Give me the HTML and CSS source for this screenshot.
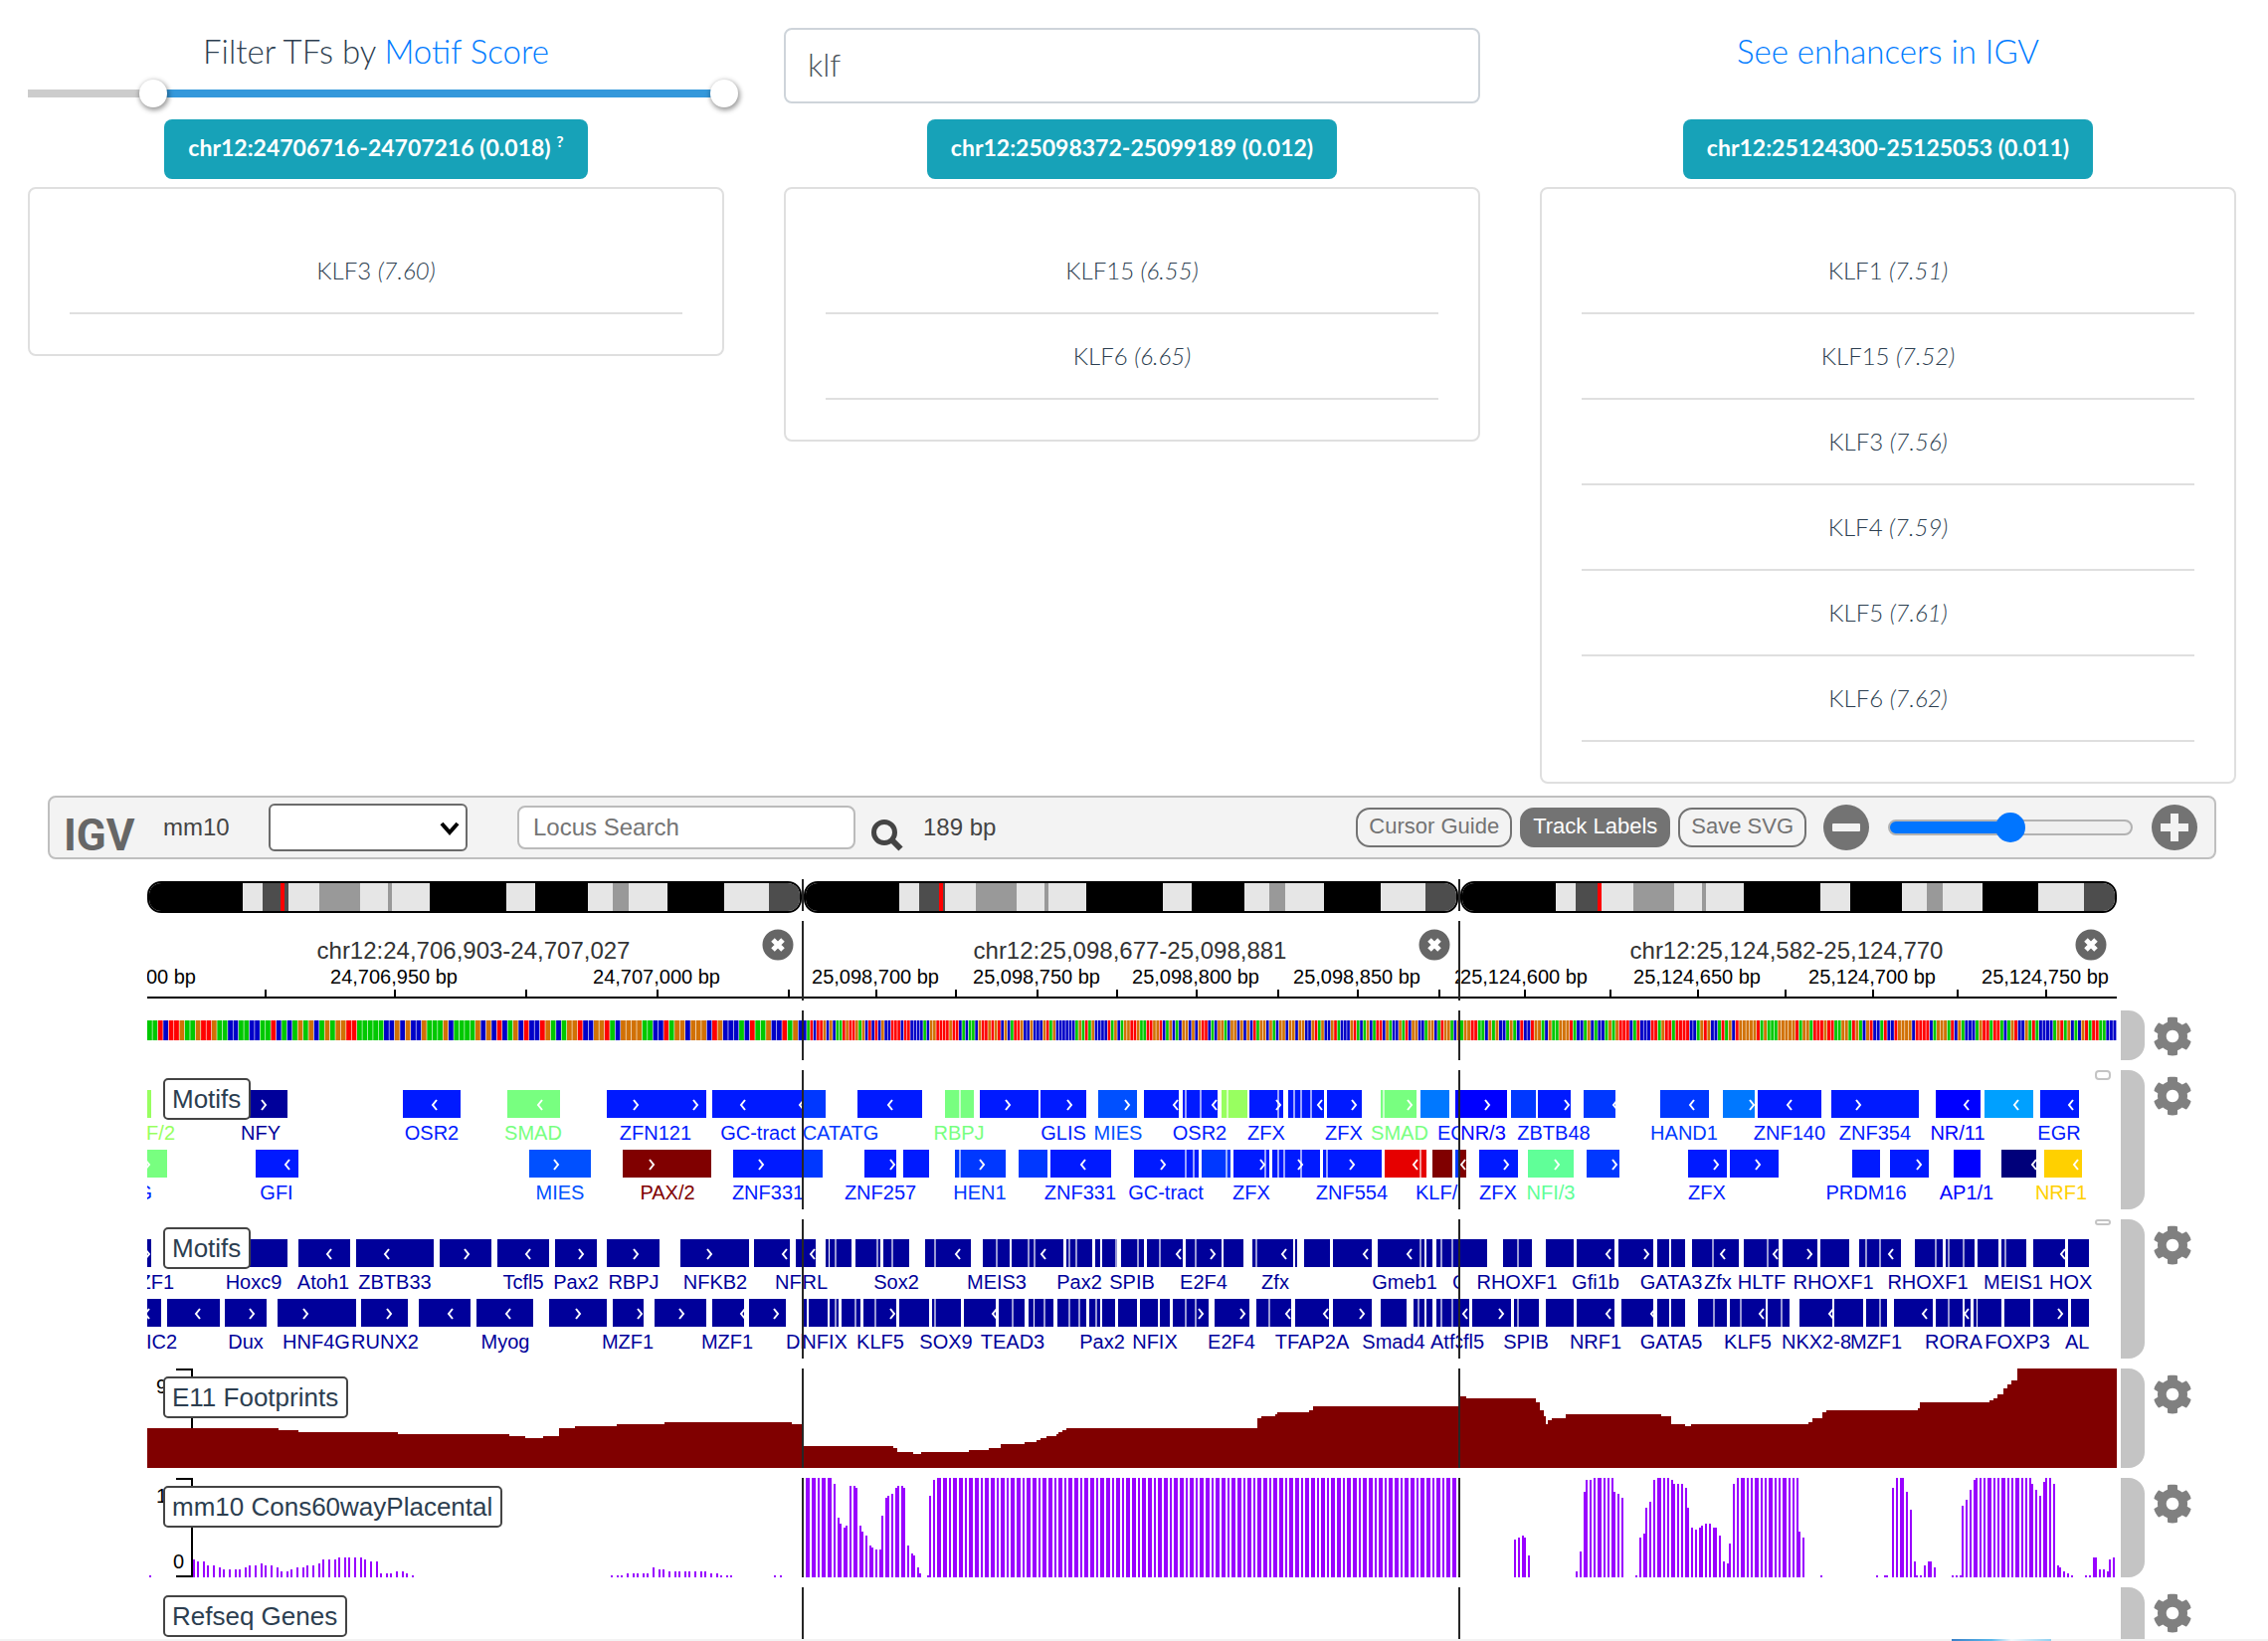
FILE: index.html
```html
<!DOCTYPE html>
<html lang="en">
<head>
<meta charset="utf-8">
<title>TF motif enhancers</title>
<link rel="stylesheet" href="styles.css">
</head>
<body>
<svg class="sprite" aria-hidden="true">
  <symbol id="cog" viewBox="0 0 512 512"><path d="M487.4 315.7l-42.6-24.6c4.3-23.2 4.3-47 0-70.2l42.6-24.6c4.9-2.8 7.1-8.6 5.5-14-11.1-35.6-30-67.8-54.7-94.6-3.8-4.1-10-5.1-14.8-2.3L380.8 110c-17.9-15.4-38.5-27.3-60.8-35.1V25.8c0-5.6-3.9-10.5-9.4-11.7-36.7-8.2-74.3-7.8-109.2 0-5.5 1.2-9.4 6.1-9.4 11.7V75c-22.2 7.9-42.8 19.8-60.8 35.1L88.7 85.5c-4.9-2.8-11-1.9-14.8 2.3-24.7 26.7-43.6 58.9-54.7 94.6-1.7 5.4.6 11.2 5.5 14L67.3 221c-4.3 23.2-4.3 47 0 70.2l-42.6 24.6c-4.9 2.8-7.1 8.6-5.5 14 11.1 35.6 30 67.8 54.7 94.6 3.8 4.1 10 5.1 14.8 2.3l42.6-24.6c17.9 15.4 38.5 27.3 60.8 35.1v49.2c0 5.6 3.9 10.5 9.4 11.7 36.7 8.2 74.3 7.8 109.2 0 5.5-1.2 9.4-6.1 9.4-11.7v-49.2c22.2-7.9 42.8-19.8 60.8-35.1l42.6 24.6c4.9 2.8 11 1.9 14.8-2.3 24.7-26.7 43.6-58.9 54.7-94.6 1.5-5.5-.7-11.3-5.6-14.1zM256 336c-44.1 0-80-35.9-80-80s35.9-80 80-80 80 35.9 80 80-35.9 80-80 80z"/></symbol>
  <symbol id="close" viewBox="0 0 32 32"><circle cx="16" cy="16" r="15.5" fill="#666"/><path d="M11 11l10 10M21 11L11 21" stroke="#fff" stroke-width="5"/></symbol>
</svg>

<main>
  <section class="columns">
    <div class="column">
      <div class="column-head">
        <p class="title">Filter TFs by <a href="#score">Motif Score</a></p>
        <div class="dual-range">
          <input type="range" min="0" max="100" value="18" aria-label="Minimum motif score">
          <input type="range" min="0" max="100" value="100" aria-label="Maximum motif score">
        </div>
      </div>
      <span class="badge">chr12:24706716-24707216 (0.018) <sup>?</sup></span>
      <ul class="card">
        <li>KLF3 <em>(7.60)</em></li>
      </ul>
    </div>
    <div class="column">
      <div class="column-head">
        <input class="tf-search" type="text" value="klf" aria-label="Search TFs">
      </div>
      <span class="badge">chr12:25098372-25099189 (0.012)</span>
      <ul class="card">
        <li>KLF15 <em>(6.55)</em></li>
        <li>KLF6 <em>(6.65)</em></li>
      </ul>
    </div>
    <div class="column">
      <div class="column-head">
        <p class="title"><a href="#igv">See enhancers in IGV</a></p>
      </div>
      <span class="badge">chr12:25124300-25125053 (0.011)</span>
      <ul class="card">
        <li>KLF1 <em>(7.51)</em></li>
        <li>KLF15 <em>(7.52)</em></li>
        <li>KLF3 <em>(7.56)</em></li>
        <li>KLF4 <em>(7.59)</em></li>
        <li>KLF5 <em>(7.61)</em></li>
        <li>KLF6 <em>(7.62)</em></li>
      </ul>
    </div>
  </section>

  <section class="igv" id="igv">
    <div class="toolbar">
      <span class="logo">IGV</span>
      <span class="genome">mm10</span>
      <span class="chrom">
        <select aria-label="Chromosome"><option></option></select>
        <svg width="20" height="14" viewBox="0 0 20 14" aria-hidden="true"><path d="M2 2l8 9 8-9" fill="none" stroke="#000" stroke-width="4"/></svg>
      </span>
      <input class="locus" type="text" placeholder="Locus Search" aria-label="Locus Search">
      <button class="icon-button search" aria-label="Search">
        <svg width="32" height="32" viewBox="0 0 32 32"><circle cx="13" cy="13" r="10.5" fill="none" stroke="#444" stroke-width="5"/><path d="M20 20l9.500 9.500" stroke="#444" stroke-width="6"/></svg>
      </button>
      <span class="window-size">189 bp</span>
      <div class="tools">
        <button class="pill">Cursor Guide</button>
        <button class="pill active">Track Labels</button>
        <button class="pill">Save SVG</button>
        <button class="icon-button zoom-out" aria-label="Zoom out">
          <svg width="46" height="46" viewBox="0 0 46 46"><circle cx="23" cy="23" r="23" fill="#737373"/><rect x="9" y="19" width="28" height="8" rx="1" fill="#f3f3f3"/></svg>
        </button>
        <input class="zoom" type="range" min="0" max="100" value="50" aria-label="Zoom">
        <button class="icon-button zoom-in" aria-label="Zoom in">
          <svg width="46" height="46" viewBox="0 0 46 46"><circle cx="23" cy="23" r="23" fill="#737373"/><path d="M9 19h10V9h8v10h10v8H27v10h-8V27H9z" fill="#f3f3f3"/></svg>
        </button>
      </div>
    </div>

    <div class="tracks">
      <div class="track ideogram" data-kind="ideogram">
        <div class="panels"></div>
      </div>
      <div class="track ruler">
        <div class="panels">
          <div class="panel"><p class="range">chr12:24,706,903-24,707,027</p><button class="icon-button close" aria-label="Close panel"><svg width="32" height="32"><use href="#close"/></svg></button></div>
          <div class="panel"><p class="range">chr12:25,098,677-25,098,881</p><button class="icon-button close" aria-label="Close panel"><svg width="32" height="32"><use href="#close"/></svg></button></div>
          <div class="panel"><p class="range">chr12:25,124,582-25,124,770</p><button class="icon-button close" aria-label="Close panel"><svg width="32" height="32"><use href="#close"/></svg></button></div>
        </div>
      </div>
      <div class="track sequence" data-kind="sequence">
        <div class="panels"></div>
        <span class="handle"></span>
        <button class="icon-button gear" aria-label="Track settings"><svg width="40" height="40"><use href="#cog"/></svg></button>
      </div>
      <div class="track motifs" data-kind="motifs">
        <div class="panels"><span class="track-label">Motifs</span><span class="scroll-thumb"></span></div>
        <span class="handle"></span>
        <button class="icon-button gear" aria-label="Track settings"><svg width="40" height="40"><use href="#cog"/></svg></button>
      </div>
      <div class="track motifs" data-kind="denseMotifs">
        <div class="panels"><span class="track-label">Motifs</span><span class="scroll-thumb short"></span></div>
        <span class="handle"></span>
        <button class="icon-button gear" aria-label="Track settings"><svg width="40" height="40"><use href="#cog"/></svg></button>
      </div>
      <div class="track wiggle" data-kind="footprints">
        <div class="panels"><span class="track-label">E11 Footprints</span></div>
        <span class="handle"></span>
        <button class="icon-button gear" aria-label="Track settings"><svg width="40" height="40"><use href="#cog"/></svg></button>
      </div>
      <div class="track wiggle" data-kind="conservation">
        <div class="panels"><span class="track-label">mm10 Cons60wayPlacental</span></div>
        <span class="handle"></span>
        <button class="icon-button gear" aria-label="Track settings"><svg width="40" height="40"><use href="#cog"/></svg></button>
      </div>
      <div class="track genes" data-kind="genes">
        <div class="panels"><span class="track-label">Refseq Genes</span></div>
        <span class="handle"></span>
        <button class="icon-button gear" aria-label="Track settings"><svg width="40" height="40"><use href="#cog"/></svg></button>
      </div>
    </div>
  </section>
</main>
<footer class="strip"></footer>
<script src="tracks.js"></script>
</body>
</html>
```
FILE: styles.css
```css
* { box-sizing: border-box; }

body {
  margin: 0;
  background: #fff;
  color: #2c3e50;
  font-family: Lato, "Liberation Sans", sans-serif;
  font-size: 24px;
  overflow-x: hidden;
}

p, ul { margin: 0; padding: 0; }
a { color: #007bff; text-decoration: none; }
button, input, select { font: inherit; margin: 0; }
svg { display: block; }
.sprite { position: absolute; width: 0; height: 0; }

.icon-button {
  padding: 0;
  border: 0;
  background: none;
  flex: none;
}

/* Filter columns */
.columns {
  display: grid;
  grid-template-columns: repeat(3, 1fr);
  gap: 60px;
  align-items: start;
  padding: 28px 32px 0 28px;
  font-weight: 300;
}
.column { display: flex; flex-direction: column; align-items: center; }
.column-head { width: 100%; height: 92px; }
.title { height: 44px; font-size: 33px; line-height: 46px; text-align: center; }

.dual-range {
  position: relative;
  height: 28px;
  margin-top: 8px;
  background: linear-gradient(to right, #ccc 18%, #3498db 18%) center / 100% 8px no-repeat;
}
.dual-range input {
  position: absolute;
  left: -14px;
  top: 0;
  width: calc(100% + 28px);
  height: 28px;
  appearance: none;
  background: none;
  pointer-events: none;
}
.dual-range input::-webkit-slider-thumb {
  appearance: none;
  width: 28px;
  height: 28px;
  border-radius: 50%;
  background: #fff;
  box-shadow: 1px 2px 5px 1px rgba(0, 0, 0, .4);
  pointer-events: auto;
}

.tf-search {
  display: block;
  width: 100%;
  height: 76px;
  padding: 0 22px 4px;
  border: 2px solid #ced4da;
  border-radius: 8px;
  color: #495057;
  font-size: 32px;
}

.badge {
  height: 60px;
  padding: 10px 24px 14px;
  border-radius: 8px;
  background: #17a2b8;
  color: #fff;
  font-size: 23px;
  font-weight: 700;
  line-height: 36px;
}
.badge sup { font-size: 16px; line-height: 0; }

.card {
  width: 100%;
  margin-top: 8px;
  padding: 40px;
  border: 2px solid #dfdfdf;
  border-radius: 8px;
  list-style: none;
}
.card li {
  padding: 24px 0;
  border-bottom: 2px solid #dfdfdf;
  line-height: 36px;
  text-align: center;
}

/* Genome browser */
.igv {
  margin: 12px 52px 0 48px;
  font-family: "Liberation Sans", Arial, sans-serif;
}
.toolbar {
  display: flex;
  align-items: center;
  height: 64px;
  padding: 0 17px 0 14px;
  border: 2px solid #bfbfbf;
  border-radius: 8px;
  background: #f3f3f3;
  color: #444;
}
.logo {
  width: 100px;
  padding-top: 16px;
  color: #666;
  font-family: Roboto, sans-serif;
  font-size: 44px;
  font-weight: 700;
  line-height: 44px;
}
.genome { width: 106px; }
.chrom { position: relative; }
.chrom select {
  display: block;
  width: 200px;
  height: 48px;
  border: 2px solid #6b6b6b;
  border-radius: 6px;
  background: #fff;
  appearance: none;
}
.chrom svg { position: absolute; right: 8px; top: 18px; }
.locus {
  width: 340px;
  height: 44px;
  margin-left: 50px;
  padding: 0 14px;
  border: 2px solid #bbb;
  border-radius: 8px;
}
.locus::placeholder { color: #757575; opacity: 1; }
.search { margin: 16px 20px 0 16px; }

.tools { display: flex; align-items: center; margin-left: auto; }
.pill {
  height: 40px;
  margin-right: 8px;
  padding: 0 11px 2px;
  border: 2px solid #737373;
  border-radius: 14px;
  background: none;
  color: #737373;
  font-size: 22px;
  white-space: nowrap;
}
.pill.active { background: #737373; color: #fff; }
.zoom-out { margin: 0 19px 0 9px; }
.zoom-in { margin-left: 19px; }
.zoom {
  width: 246px;
  height: 16px;
  border: 2px solid #b2b2b2;
  border-radius: 8px;
  background: linear-gradient(to right, #0075ff 50%, #efefef 50%) border-box;
  appearance: none;
}
.zoom::-webkit-slider-thumb {
  appearance: none;
  width: 30px;
  height: 30px;
  border-radius: 50%;
  background: #0075ff;
}

/* Tracks */
.tracks {
  display: flex;
  flex-direction: column;
  gap: 10px;
  padding: 20px 0 0 100px;
}
.track {
  display: grid;
  grid-template-columns: 1fr 24px 40px;
  grid-template-rows: 100%;
  column-gap: 8px;
  height: 100px;
  padding-right: 24px;
}
.track .panels {
  position: relative;
  display: grid;
  grid-template-columns: repeat(3, 1fr);
  grid-template-rows: 100%;
  margin-right: -4px;
  min-width: 0;
}
.track.ideogram, .track.ruler { grid-template-columns: 1fr 24px 40px; }
.panel { position: relative; min-width: 0; height: 100%; }
.panel:not(:last-of-type)::after {
  content: "";
  position: absolute;
  top: 0;
  bottom: 0;
  right: 0;
  width: 2px;
  background: #262626;
}
.panel > svg { width: 100%; height: 100%; }
.panel text { font-size: 20px; }
.panel rect { shape-rendering: crispEdges; }
.sequence .panel rect { shape-rendering: auto; }
.track.ideogram { height: 32px; }
.track.ruler { height: 80px; }
.track.sequence { height: 50px; }
.track.motifs { height: 140px; }
.track.genes { height: 52px; }

.chromosome {
  display: flex;
  height: 32px;
  margin: 2px 2px 0 0;
  border: 2px solid #000;
  border-radius: 14px;
  overflow: hidden;
}
.panel:last-of-type .chromosome { margin-right: 0; }
.chromosome svg { width: 100%; height: 100%; }

.range {
  height: 48px;
  padding: 12px 4px 0 0;
  color: #333;
  line-height: 36px;
  text-align: center;
}
.ruler .panel > svg { height: 32px; }
.close { position: absolute; top: 8px; right: 10px; }

.handle { background: #c4c4c4; border-radius: 0 16px 16px 0; }
.genes .handle { border-radius: 0 16px 0 0; }
.gear { height: 40px; margin-top: 6px; fill: #808080; }

.track-label {
  position: absolute;
  z-index: 1;
  left: 16px;
  top: 8px;
  padding: 0 8px 0 7px;
  border: 2px solid #444;
  border-radius: 5px;
  background: #fff;
  color: #2c3e50;
  font-size: 26px;
  line-height: 38px;
  white-space: nowrap;
}
.scroll-thumb {
  position: absolute;
  top: 0;
  right: 6px;
  width: 16px;
  height: 10px;
  border: 2px solid #c4c4c4;
  border-radius: 4px;
}
.scroll-thumb.short { height: 6px; border-radius: 3px; }

.strip {
  height: 2px;
  background: linear-gradient(to right, #3a80c8, #5ab8ea 40%, #f4fafc 60%, #8fd0f0) 90% 0 / 100px 2px no-repeat, #f3f3f3;
}
```
FILE: tracks.js
```js
// Positions are in units of a 660-unit wide panel and drawn as percentages,
// so that the tracks follow the width of the window.
const SPAN = 660;
const pct = v => (v / SPAN * 100).toFixed(4) + '%';
const rect = (x, y, w, h, fill) =>
  `<rect x="${pct(x)}" y="${y}" width="${pct(w)}" height="${h}" fill="${fill}"/>`;
const text = (x, y, s, fill, anchor = 'middle') =>
  `<text x="${pct(x)}" y="${y}" fill="${fill}" text-anchor="${anchor}">${s}</text>`;
const svg = body => `<svg>${body}</svg>`;

// Ideogram
const BANDS = [
  [0, '#000'], [95, '#e6e6e6'], [115, '#4d4d4d'], [141, '#e6e6e6'], [173, '#999'],
  [214, '#e6e6e6'], [242, '#999'], [246, '#e6e6e6'], [285, '#000'], [362, '#e6e6e6'],
  [392, '#000'], [445, '#e6e6e6'], [470, '#999'], [486, '#e6e6e6'], [526, '#000'],
  [583, '#e6e6e6'], [629, '#4d4d4d'], [660, '#000']
];
const ideogram = [133, 135, 137].map(mark => {
  let out = '';
  for (let i = 0; i < BANDS.length - 1; i++) {
    out += rect(BANDS[i][0], 0, BANDS[i + 1][0] - BANDS[i][0], 30, BANDS[i][1]);
  }
  return `<div class="chromosome">${svg(out + rect(mark, 0, 4, 30, '#f00'))}</div>`;
});

// Ruler
const RULER = [
  { ticks: [119, 249, 381, 513, 645], labels: [[-15, '24,706,900'], [248, '24,706,950'], [512, '24,707,000']] },
  { ticks: [73, 153, 235, 315, 395, 477, 557, 639], labels: [[72, '25,098,700'], [234, '25,098,750'], [394, '25,098,800'], [556, '25,098,850'], [718, '25,098,900']] },
  { ticks: [65, 151, 239, 327, 415, 500, 589], labels: [[64, '25,124,600'], [238, '25,124,650'], [414, '25,124,700'], [588, '25,124,750']] }
];
const ruler = RULER.map(r => svg(
  rect(0, 28, SPAN, 2, '#000') +
  r.ticks.map(t => rect(t - 1, 21, 2, 7, '#000')).join('') +
  r.labels.map(([x, s]) => text(x, 15, s + ' bp', '#000')).join('')
));

// Sequence
const BASE = { G: '#00c800', R: '#ff0000', B: '#0000c8', O: '#d17105' };
const SEQUENCE = [
  'GGRBRROGGORROGGBBGGBBGGRBGBGOGOBGOGOORRGGGGGBBOBOBBOGGGOBGGGGOBOBRBGOBRBBROGBGOORBBOORGBOOOOGGBBRGOOBOOOBROBBBGBRGGOBBRGOB',
  'BGRBRROBOBGGRORROGOBRBRBOBBRRRBRRBBBBGBOORRRRORRBGBGGBORRORORBOBGRROBBOBBBORGOBBBBBBGOGRGOBBBBRGOBGOORROGGRROORBGOBGBOOBOBORRBGBOOGBOOBOBOBRGOOBOGBOOBOOBOOBBORGOBBORGBBBORGBGOBGRRBOGBBOGRBOOBBGOOBGROOGBO',
  'GOORRGGBOGOBBGOGBRBBROOGBOGGOOORGBBGOBGBBGOGORRRBGRBBBRRGORRGRRRRBBGOROBBGRGOBROOOOORGOGGGOOOOORGOOGRRRORRGGOOGROGBORBBGRBBROOOOBRRRRBGOOOGRBOGBBBGORRGRRGBGORBBOGRGBBBBGORGOBGBORGRRGGBBB'
];
const sequence = SEQUENCE.map(s => {
  const pitch = SPAN / s.length;
  return svg([...s].map((b, i) => rect(i * pitch, 10, pitch - 0.6, 20, BASE[b])).join(''));
});

// Motif rows. Tokens: "start-end" box, "/x" seam, "<x" or ">x" strand arrow,
// "NAME@x" label (s or e before x: text starts or ends there). A trailing letter is a colour.
const COLOURS = {
  b: '#001aff', n: '#00009a', c: '#0038ff', m: '#0050ff', k: '#0078ff', z: '#00a0ff',
  u: '#0000ff', d: '#00007a', g: '#78ff80', l: '#98ff60', t: '#60ff98', r: '#e60000',
  p: '#800000', y: '#ffd000'
};
function motifRow(tokens, top, base) {
  return tokens.split(' ').map(token => {
    let m;
    if ((m = token.match(/^(-?\d+)-(\d+)([a-z])?$/))) {
      return rect(+m[1], top, m[2] - m[1], 28, COLOURS[m[3] || base]);
    }
    if ((m = token.match(/^\/(\d+)$/))) {
      return rect(+m[1], top, 2, 28, 'rgba(255,255,255,.6)');
    }
    if ((m = token.match(/^([<>])(\d+)$/))) {
      const d = m[1] === '>' ? 'M-2 -5l4 5l-4 5' : 'M2 -5l-4 5l4 5';
      return `<svg x="${pct(+m[2])}" y="${top + 15}" width="1" height="1" overflow="visible"><path d="${d}" fill="none" stroke="#fff" stroke-width="2"/></svg>`;
    }
    m = token.match(/^(.+)@([se]?)(-?\d+)([a-z])?$/);
    const anchor = { s: 'start', e: 'end' }[m[2]] || 'middle';
    return text(+m[3], top + 50, m[1], COLOURS[m[4] || base], anchor);
  }).join('');
}
const motifPanels = (rows, base) =>
  rows.map(([a, b]) => svg(motifRow(a, 20, base) + motifRow(b, 80, base)));

const motifs = motifPanels([
  ['0-4l KLF/2@e28l 86-141n >117 NFY@114n 257-315 <289 OSR2@286 362-415g <395 SMAD@388g 462-562 >491 >551 ZFN121@511 568-660 <599 <658 GC-tract@614',
   '0-20g >0 G@e5 109-152 <141 GFI@130 384-446m >411 MIES@415m 478-567p >507 PAX/2@523p 589-660 >617 ZNF331@624'],
  ['-8-22c CATATG@37c 54-119 <87 142-171g /156 RBPJ@156g 177-236 >205 238-284 >267 GLIS@261 296-335m >325 MIES@316m 342-377 <374 381-416 /383 /398 <413 OSR2@398 420-446l /425 448-482 /476 >477 ZFX@465 487-523 /492 /499 /509 <519 526-561 >553 ZFX@543 580-616g /582 >609 SMAD@599g 620-649k 655-660u EGR@s637',
   '-8-19c 61-93 >89 ZNF257@77 100-126 152-203c /156 >179 HEN1@177c 216-245c 248-309 <281 ZNF331@278 332-397 /383 /391 >361 GC-tract@364 400-429c /424 432-468 /463 >461 ZFX@450 471-519 /476 /482 /499 >499 522-581 /525 >551 ZNF554@551 584-626r /619 <615 632-652p 655-660c KLF/3@s615'],
  ['0-47u >27 NR/3@23u 51-76c 78-111 >107 ZBTB48@94 124-156c <156 201-250c <233 HAND1@225c 264-296k >293 299-363 <331 ZNF140@331 373-461 >400 ZNF354@417 478-523u <509 NR/11@500u 527-576z <559 583-622 <614 EGR@602',
   '0-6p <3 19-58 >46 ZFX@38 68-114t >97 NFI/3@91t 127-160c >155 229-268 >257 ZFX@248 271-320 >299 394-422 PRDM16@408 432-471 >461 496-523u AP1/1@509u 544-579d <577 587-625y <619 NRF1@604y']
], 'b');

const denseMotifs = motifPanels([
  ['0-4 >0 MZF1@e27 86-141 Hoxc9@107 152-204 <183 Atoh1@177 210-288 <241 ZBTB33@249 294-346 >321 352-404 <383 Tcfl5@378 410-452 >436 Pax2@431 462-515 >491 RBPJ@489 536-605 >565 NFKB2@571 610-646 <641 652-660 NF@s631',
   '0-14 <0 HIC2@e30 20-73 <51 78-120 >105 Dux@99 131-210 >159 HNF4G@170 215-262 >243 RUNX2@239 273-325 <305 331-388 <363 Myog@360 404-462 >433 468-499 >495 MZF1@483 510-562 >537 568-600 <599 MZF1@583 605-642 >632 658-660 Dlx@s642'],
  ['-8-12 <9 RL@e24 22-25 26-48 /31 52-77 /73 80-106 /88 Sox2@93 122-168 /131 <155 180-207 /193 MEIS3@194 209-261 /225 /231 <241 264-290 /266 /273 Pax2@277 293-298 300-315 /313 319-342 /335 SPIB@330 345-381 /357 <377 384-420 /393 >411 E2F4@402 422-442 451-492 /454 <483 Zfx@474 494-496 503-529 532-571 <565 577-624 /619 <609 Gmeb1@604 626-632 636-660 /640 /651 GLI@s652',
   '0-3 5-24 26-35 /31 38-57 /51 60-93 /71 >89 NFIX@21 KLF5@77 96-126 129-158 /131 SOX9@143 161-193 <192 196-222 /209 TEAD3@210 226-231 232-251 /241 255-284 /266 /276 287-298 /293 300-313 Pax2@300 316-335 338-356 NFIX@353 358-368 371-407 /383 /393 >399 413-448 >441 E2F4@430 455-490 /467 <487 494-528 <525 TFAP2A@511 532-571 >561 580-606 Smad4@593 613-624 /617 626-632 636-660 /640 /651 Atf3@s630'],
  ['-8-27 43-72 /57 RHOXF1@57 86-114 117-155 <149 Gfi1b@136 159-194 >187 198-210 212-226 GATA3@212 233-280 /253 <264 Zfx@259 285-320 /308 <317 HLTF@303 324-359 >351 362-391 RHOXF1@375 401-443 /407 /421 <433 457-485 /477 488-517 /490 /505 RHOXF1@470 520-541 544-569 /547 MEIS1@556 576-608 <606 611-632 HOX@s592',
   '-8-9 <5 Tcfl5@e24 12-51 >41 54-79 /57 SPIB@66 86-114 117-155 <149 NRF1@136 162-194 <194 198-210 212-226 GATA5@212 239-268 /254 271-307 /281 <303 KLF5@289 309-331 /322 341-374 <373 NKX2-8@358 376-405 408-429 /421 MZF1@418 436-475 <467 478-505 /490 507-513 <509 516-519 RORA@496 520-544 547-573 FOXP3@560 576-611 >603 614-632 AL@s608']
], 'n');

// Signal tracks
const FOOTPRINTS = [
  [[0, 60], [132, 62], [152, 64], [252, 66], [364, 68], [380, 70], [398, 68], [414, 60], [430, 58], [472, 56], [520, 54], [648, 56]],
  [[0, 78], [90, 80], [94, 84], [110, 86], [118, 84], [166, 82], [186, 80], [198, 76], [222, 74], [234, 72], [238, 70], [244, 68], [254, 66], [256, 64], [260, 62], [264, 60], [456, 50], [460, 48], [474, 46], [476, 44], [508, 42], [512, 38]],
  [[0, 28], [6, 30], [76, 34], [80, 42], [84, 48], [86, 56], [88, 52], [92, 50], [106, 46], [202, 48], [212, 56], [226, 58], [232, 56], [350, 54], [354, 50], [364, 44], [368, 42], [460, 40], [462, 34], [532, 32], [536, 30], [540, 26], [546, 20], [550, 16], [554, 12], [560, 0]]
];
const axis = high =>
  rect(29, 0, 16, 2, '#000') + rect(44, 0, 2, 100, '#000') + rect(29, 98, 16, 2, '#000') +
  text(9, 25, high, '#000', 'start') + text(37, 91, '0', '#000', 'end');
const footprints = FOOTPRINTS.map((steps, p) => svg(
  (p === 0 ? axis('9.0') : '') +
  steps.map(([x, y], i) => {
    const end = i + 1 < steps.length ? steps[i + 1][0] : SPAN;
    return rect(x, y, end - x, 100 - y, '#800000');
  }).join('')
));

const full = n => Array(n).fill(100);
const CONSERVATION = [
  { pitch: 5.26, runs: [
    [2, [2]],
    [46, [18, 16, 16, 12, 12, 10, 8, 8, 8, 8, 10, 12, 12, 14, 12, 12, 10, 6, 6, 8, 10, 10, 12, 12, 14, 18, 18, 18, 20, 20, 20, 20, 20, 18, 16, 16, 4, 4, 4, 6, 6, 4, 2]],
    [467, [2, 2, 2, 4, 4, 4, 4, 4, 10, 8, 8, 6, 6, 6, 6, 6, 6, 6, 6, 4, 4, 2, 2, 2]],
    [631, [2, 2]]] },
  { pitch: 3.22, runs: [
    [2, [...full(9), 94, 60, 54, 50, 52, 92, 92, 90, 52, 46, 42, 32, 30, 28, 28, 62, 80, 82, 84, 90, 92, 92, 90, 32, 24, 22, 10, 4, 0, 2, 82, 98, ...full(163)]]] },
  { pitch: 3.51, runs: [
    [55, [38, 40, 42, 40, 22]],
    [117, [6, 26, 86, 98, 98, ...full(6), 86, 84, 80]],
    [177, [2, 40, 44, 70, 76, 98, ...full(4), 98, 94, 94, 94, 90, 70, 50, 48, 50, 52, 54, 54, 50, 50, 42, 16, 14, 34, 94, ...full(18), 46, 40]],
    [363, [2]],
    [419, [2, 0, 2, 2]],
    [435, [90, 100, 100, 100, 86, 68, 16, 2, 2, 12, 16, 16, 10]],
    [495, [2, 2, 2, 72, 78, 88, 98, ...full(16), 94, 88, 82, 96, 100, 100, 94, 12, 10, 6, 4, 2]],
    [629, [2, 2, 20, 20, 8, 8, 6, 18, 20]]] }
];
const conservation = CONSERVATION.map(({ pitch, runs }, p) => svg(
  (p === 0 ? axis('1.0') : '') +
  runs.map(([x, heights]) => heights.map((h, i) =>
    rect(2 * Math.floor((x + i * pitch) / 2), 100 - h, 2, h, '#9900ff')).join('')).join('')
));

const genes = ['', '', ''];
const TRACKS = { ideogram, sequence, motifs, denseMotifs, footprints, conservation, genes };
document.querySelectorAll('[data-kind]').forEach(track => {
  const panels = track.querySelector('.panels');
  TRACKS[track.dataset.kind].forEach(body =>
    panels.insertAdjacentHTML('beforeend', `<div class="panel">${body}</div>`));
});
document.querySelectorAll('.ruler .panel').forEach((panel, i) =>
  panel.insertAdjacentHTML('beforeend', ruler[i]));
```
